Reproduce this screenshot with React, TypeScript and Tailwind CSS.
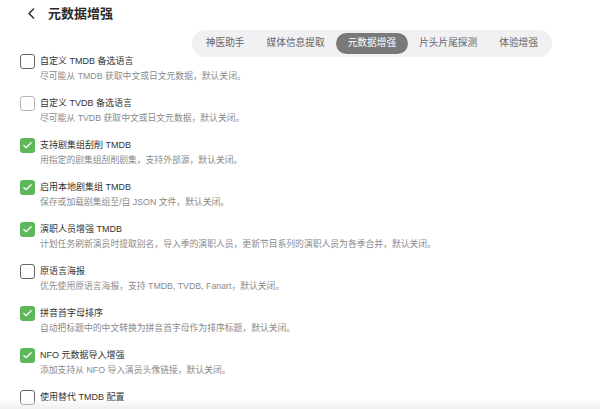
import { Check } from "lucide-react";

const tabs = ["神医助手", "媒体信息提取", "元数据增强", "片头片尾探测", "体验增强"];

const options = [
  { label: "自定义 TMDB 备选语言", desc: "尽可能从 TMDB 获取中文或日文元数据，默认关闭。", checked: false, dark: true },
  { label: "自定义 TVDB 备选语言", desc: "尽可能从 TVDB 获取中文或日文元数据，默认关闭。", checked: false, dark: false },
  { label: "支持剧集组刮削 TMDB", desc: "用指定的剧集组刮削剧集，支持外部源，默认关闭。", checked: true },
  { label: "启用本地剧集组 TMDB", desc: "保存或加载剧集组至/自 JSON 文件，默认关闭。", checked: true },
  { label: "演职人员增强 TMDB", desc: "计划任务刷新演员时提取别名，导入季的演职人员，更新节目系列的演职人员为各季合并，默认关闭。", checked: true },
  { label: "原语言海报", desc: "优先使用原语言海报，支持 TMDB, TVDB, Fanart，默认关闭。", checked: false, dark: true },
  { label: "拼音首字母排序", desc: "自动把标题中的中文转换为拼音首字母作为排序标题，默认关闭。", checked: true },
  { label: "NFO 元数据导入增强", desc: "添加支持从 NFO 导入演员头像链接，默认关闭。", checked: true },
  { label: "使用替代 TMDB 配置", desc: "", checked: false, dark: true },
];

function Box({ checked, dark }: { checked: boolean; dark?: boolean }) {
  if (checked) {
    return (
      <span className="flex h-[15px] w-[15px] shrink-0 items-center justify-center rounded-[3px] bg-[#5cb85a]">
        <Check className="h-[11px] w-[11px] text-white" strokeWidth={2.6} />
      </span>
    );
  }
  return (
    <span
      className={
        dark
          ? "h-[15px] w-[15px] shrink-0 rounded-[3px] border border-[#666]"
          : "h-[15px] w-[15px] shrink-0 rounded-[3px] border border-[#b5b5b5]"
      }
    />
  );
}

export default function App() {
  return (
    <div
      className="relative h-[409px] w-[600px] overflow-hidden bg-white"
      style={{ fontFamily: '"Liberation Sans", "Noto Sans CJK SC", sans-serif' }}
    >
      <div className="flex h-[27px] items-center pl-[27px]">
        <svg width="9" height="11" viewBox="0 0 9 11" className="mr-[12px]">
          <path d="M6.5 1 2 5.5 6.5 10" fill="none" stroke="#333" strokeWidth="1.6" strokeLinecap="round" strokeLinejoin="round" />
        </svg>
        <span className="text-[13px] font-semibold text-[#2b2b2b]">元数据增强</span>
      </div>

      <div className="pointer-events-none absolute left-0 right-0 top-[27px] h-[26px] bg-gradient-to-b from-white from-70% to-[#f6f6f6]/0" />

      <div className="absolute right-[48px] top-[30px] flex rounded-full bg-[#f1f1f3] p-[3px]">
        {tabs.map((t) => (
          <span
            key={t}
            className={
              t === "元数据增强"
                ? "flex h-[21px] items-center rounded-full bg-[#797979] px-[12px] text-[9.7px] text-white"
                : "flex h-[21px] items-center px-[11px] text-[9.7px] text-[#666]"
            }
          >
            {t}
          </span>
        ))}
      </div>

      <div className="flex flex-col gap-[12px] pl-[20px] pt-[27px]">
        {options.map((o) => (
          <div key={o.label} className="flex flex-col">
            <div className="flex h-[15px] items-center gap-[5px]">
              <Box checked={o.checked} dark={o.dark} />
              <span className="text-[9px] text-[#333]">{o.label}</span>
            </div>
            {o.desc && (
              <div className="flex h-[15px] items-center pl-[20px] pt-[1px] text-[8.8px] text-[#8a8a8a]">{o.desc}</div>
            )}
          </div>
        ))}
      </div>

      <div className="pointer-events-none absolute bottom-0 left-0 right-0 h-[10px] bg-gradient-to-b from-white/0 to-[#efefef]" />
    </div>
  );
}
